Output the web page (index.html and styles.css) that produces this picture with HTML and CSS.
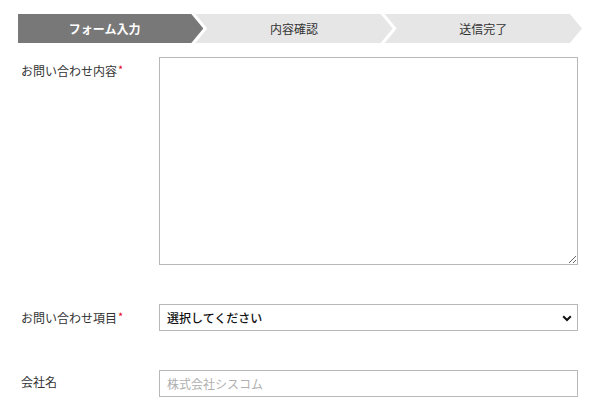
FILE: index.html
```html
<!DOCTYPE html>
<html lang="ja">
<head>
<meta charset="utf-8">
<title>お問い合わせフォーム</title>
<link rel="stylesheet" href="styles.css">
</head>
<body>
<div class="page">
  <ol class="steps">
    <li class="step step-current">フォーム入力</li>
    <li class="step">内容確認</li>
    <li class="step">送信完了</li>
  </ol>
  <form class="form">
    <div class="row row-first">
      <label class="label label-tall">お問い合わせ内容<span class="req">*</span></label>
      <div class="field"><textarea class="textarea"></textarea></div>
    </div>
    <div class="row">
      <label class="label">お問い合わせ項目<span class="req">*</span></label>
      <div class="field select-wrap">
        <select class="select">
          <option>選択してください</option>
        </select>
        <svg class="select-arrow" width="10" height="7" viewBox="0 0 10 7"><path d="M1.2 1.3 L5 5 L8.8 1.3" fill="none" stroke="#111" stroke-width="2"/></svg>
      </div>
    </div>
    <div class="row">
      <label class="label">会社名</label>
      <div class="field"><input class="input" type="text" placeholder="株式会社シスコム"></div>
    </div>
  </form>
</div>
</body>
</html>
```
FILE: styles.css
```css
html, body {
  margin: 0;
  padding: 0;
  background: #fff;
}
body {
  font-family: "Noto Sans CJK JP", "Noto Sans", sans-serif;
  color: #333;
}
.page {
  padding: 14px 18px 0 18px;
}
.steps {
  display: flex;
  list-style: none;
  margin: 0;
  padding: 0;
  height: 29px;
}
.step {
  flex: 1;
  display: flex;
  align-items: center;
  justify-content: center;
  padding: 0 12px;
  margin-left: -8px;
  background: #e6e6e6;
  color: #333;
  font-size: 12px;
  clip-path: polygon(0 0, calc(100% - 12px) 0, 100% 50%, calc(100% - 12px) 100%, 0 100%, 12px 50%);
}
.step-current {
  margin-left: 0;
  padding: 0 12px 0 0;
  background: #787878;
  color: #fff;
  font-weight: 700;
  clip-path: polygon(0 0, calc(100% - 12px) 0, 100% 50%, calc(100% - 12px) 100%, 0 100%);
}
.form {
  margin: 0;
  padding: 0 4px 0 3px;
}
.row {
  display: flex;
  align-items: flex-start;
  margin-top: 39px;
}
.row-first {
  margin-top: 14px;
}
.label {
  width: 138px;
  flex: none;
  font-size: 12px;
  line-height: 24px;
  color: #333;
}
.label-tall {
  line-height: 25px;
}
.req {
  color: #e60012;
  font-size: 11px;
  vertical-align: 2px;
  margin-left: 1px;
}
.field {
  flex: 1;
  display: flex;
}
.textarea,
.select,
.input {
  width: 100%;
  box-sizing: border-box;
  border: 1px solid #b8b8b8;
  border-radius: 0;
  background: #fff;
  font-family: "Noto Sans CJK JP", "Noto Sans", sans-serif;
  font-size: 12px;
  margin: 0;
  outline: none;
}
.textarea {
  height: 208px;
  padding: 6px 7px;
  resize: vertical;
}
.select-wrap {
  position: relative;
}
.select {
  height: 27px;
  padding: 0 24px 0 7px;
  color: #111;
  font-weight: 500;
  appearance: none;
  -webkit-appearance: none;
}
.select-arrow {
  position: absolute;
  right: 6px;
  top: 11px;
  pointer-events: none;
}
.input {
  height: 27px;
  padding: 0 7px;
  color: #333;
}
.input::placeholder {
  color: #b0b0b0;
}
```
